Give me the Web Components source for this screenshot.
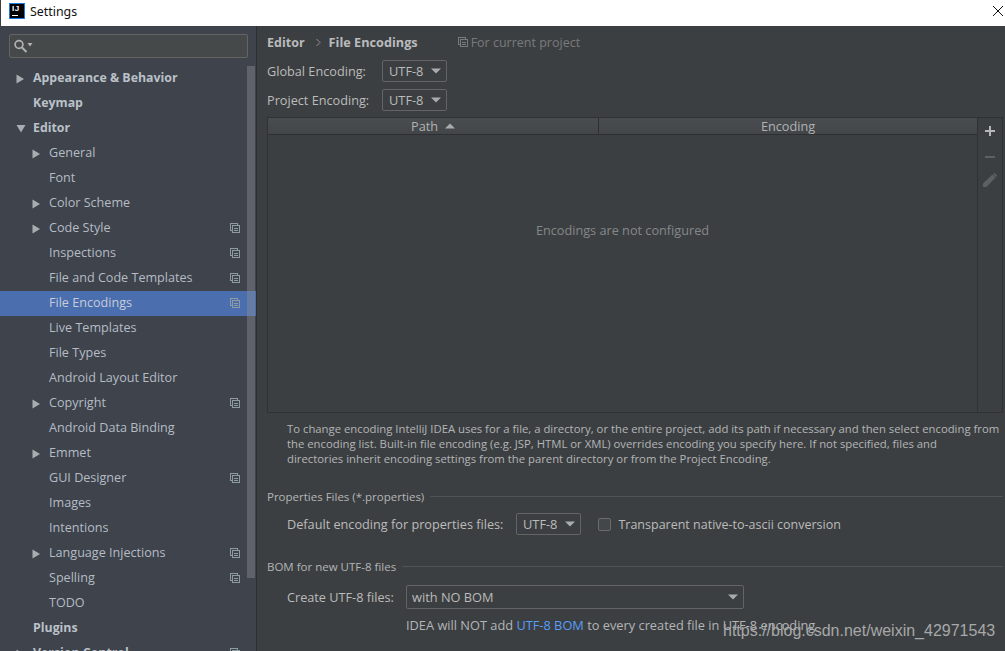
<!DOCTYPE html>
<html><head><meta charset="utf-8"><title>Settings</title>
<style>
html,body{margin:0;padding:0;height:651px;overflow:hidden;background:#3c3f41}
body{font:12.700px "Open Sans","Noto Sans",sans-serif;color:#bbb}
</style></head><body>
<settings-window></settings-window>
<script>
const copyIcon=`<svg width="10" height="10" viewBox="0 0 10 10" fill="none" stroke="#8f9ba3" stroke-width="1" shape-rendering="crispEdges"><path d="M7.5 1.5V.5H.5V7.5H1.5"/><rect x="2.5" y="2.5" width="7" height="7"/><path d="M4 5H8M4 7H8"/></svg>`;
function def(name,css,html,init){customElements.define(name,class extends HTMLElement{
  constructor(){super();const s=this.attachShadow({mode:'open'});s.innerHTML=`<style>${css}</style>`+(typeof html==='function'?html(this):html);}
  connectedCallback(){if(init)init.call(this,this.shadowRoot);}
});}
def('title-bar',`:host{display:flex;align-items:center;height:26px;background:#fff;color:#111;font:12.400px "Noto Sans","Open Sans",sans-serif;padding:0 0 4px 8px;border-left:1px solid #3c3f41;box-sizing:border-box}
.logo{width:16px;height:16px;box-sizing:border-box;background:#000;border:1px solid #1e78e0;color:#fff;position:relative;margin:-1px 5px 0 0;flex:none}
.logo b{position:absolute;left:2px;top:1px;font:bold 8px/8px "Liberation Sans",sans-serif;letter-spacing:.5px}
.logo i{position:absolute;left:2px;top:11px;width:6px;height:1px;background:#fff}
span{flex:1}
svg{margin-right:1px}`,`<div class="logo"><b>IJ</b><i></i></div><span>Settings</span><svg width="12" height="12" viewBox="0 0 12 12" stroke="#111" stroke-width="1" fill="none"><path d="M1 1L11 11M11 1L1 11"/></svg>`);
def('search-box',`:host{display:flex;align-items:center;height:24px;box-sizing:border-box;margin:8px 8px 8px 9px;background:#45494a;border:1px solid #646464;border-radius:2px;padding-left:4px}`,
`<svg width="19" height="14" viewBox="0 0 19 14" fill="none"><circle cx="5" cy="5.500" r="3.900" stroke="#afb1b3" stroke-width="1.700"/><path d="M8 8.500L12.500 13" stroke="#afb1b3" stroke-width="2"/><path d="M13.500 4H18.500L16 7.500Z" fill="#afb1b3"/></svg>`);
def('tree-row',`:host{display:flex;align-items:center;height:25px;position:relative;padding-right:16px;padding-bottom:2px;box-sizing:border-box;font-size:12.600px;color:#b5bcc4;white-space:nowrap}
:host([selected]){background:#4b6eaf;color:#c5cdd8}
:host([top]){font-weight:700;font-size:12.350px;padding-left:33px;color:#bbc1c8}
:host([sub]){padding-left:49px}
.arr{position:absolute;top:8px}
:host([top]) .arr{left:16px}:host([sub]) .arr{left:32px}
.t{flex:1}
svg{display:block;flex:none}`,
h=>{const a=h.getAttribute('arrow');return (a==='r'?`<svg class="arr" width="9" height="10" viewBox="0 0 9 10"><path d="M0.500 0.500L8 5L0.500 9.500Z" fill="#a8adb2"/></svg>`:a==='d'?`<svg class="arr" width="10" height="9" viewBox="0 0 10 9"><path d="M0.500 1H9.500L5 8.500Z" fill="#a8adb2"/></svg>`:'')+`<span class="t"><slot></slot></span>`+(h.hasAttribute('copy')?`<span class="c">${copyIcon}</span>`:'');});
def('settings-sidebar',`:host{display:block;position:relative;width:256px;flex:none;background:#3e434c;border-right:1px solid #2d2f31;overflow:hidden}
.bar{position:absolute;left:247px;top:40px;width:8px;height:512px;background:rgba(140,143,150,.42)}`,
`<search-box></search-box><div class="tree"><slot></slot></div><div class="bar"></div>`);
def('combo-box',`:host{display:inline-flex;align-items:center;box-sizing:border-box;height:22px;padding:0 5px 0 6px;border:1px solid #646464;border-radius:2px;background:#3c3f41;font:12.800px "Open Sans","Noto Sans",sans-serif;color:#bbb;white-space:nowrap}
:host([wide]){padding-left:5px}
span{flex:1}
svg{flex:none;margin-left:8px}`,`<span><slot></slot></span><svg width="10" height="6" viewBox="0 0 10 6"><path d="M0 .5H10L5 5.500Z" fill="#a9acae"/></svg>`);
def('form-row',`:host{display:flex;align-items:center;white-space:nowrap}`,`<slot></slot>`);
def('group-title',`:host{display:flex;align-items:center;gap:6px;height:16px;font-size:11.500px;color:#b3b5b7;white-space:nowrap}
i{flex:1;height:1px;background:#515355}`,`<span><slot></slot></span><i></i>`);
def('encoding-table',`:host{display:flex;height:296px;box-sizing:border-box;border:1px solid #2f3133}
.main{flex:1;display:flex;flex-direction:column;min-width:0}
.head{display:flex;height:17px;flex:none;background:linear-gradient(#4a4d4f,#434648);border-bottom:1px solid #2d2f31;font-size:12.700px;color:#b0b2b4;box-sizing:border-box}
.h{display:flex;align-items:center;justify-content:center;gap:7px;line-height:15px}
.p{width:330px;border-right:1px solid #2d2f31}
.e{flex:1}
.body{flex:1;display:flex;align-items:center;justify-content:center;color:#85888b;font-size:12.700px;padding-bottom:88px}
.tools{width:25px;flex:none;border-left:1px solid #2f3133;display:flex;flex-direction:column;align-items:center;padding:5px 1px 0 0;gap:10px;box-sizing:border-box}
svg{display:block}`,
`<div class="main"><div class="head"><div class="h p">Path <svg width="10" height="6" viewBox="0 0 10 6"><path d="M0 5.500H10L5 .5Z" fill="#a9acae"/></svg></div><div class="h e">Encoding</div></div><div class="body">Encodings are not configured</div></div>
<div class="tools"><svg width="10" height="16" viewBox="0 0 10 16"><path d="M0 7H10V9H0ZM4 3H6V13H4Z" fill="#b4b6b8"/></svg>
<svg style="margin-top:-1px" width="10" height="16" viewBox="0 0 10 16"><path d="M0 8H10V10H0Z" fill="#5d6062"/></svg>
<svg style="margin-top:-1px" width="14" height="14" viewBox="0 0 14 14"><path d="M0 14V10.500L9.500 1.500L12.500 4.500L3.500 14Z M10.500 .5Q11.500 -.2 12.500 .7L13.500 1.700Q14.200 2.700 13.500 3.500L12.800 4L10 1Z" fill="#5d6062"/></svg></div>`);
def('check-box',`:host{display:inline-flex;align-items:center;gap:7px;font-size:12.500px}
i{width:11px;height:11px;border:1px solid #6b6b6b;border-radius:2px;background:#43474a;display:block}`,`<i></i><span><slot></slot></span>`);
def('water-mark',`:host{position:absolute;left:723px;top:621px;font:16px "Liberation Sans",Arial,sans-serif;color:#a6a8a9;white-space:nowrap;line-height:20px}`,`<slot></slot>`);
def('encodings-page',`:host{display:block;flex:1;min-width:0;padding:0 2px 0 10px;box-sizing:border-box;overflow:hidden}
.crumb{display:flex;align-items:center;height:16px;margin-top:8px;white-space:nowrap;color:#b9bbbd}
.crumb b{font-weight:700;font-size:12.500px}
.crumb b+svg+b{font-size:12.700px}
.crumb svg{margin:0 8px 0 11px}
.crumb .proj{display:flex;align-items:center;gap:3px;margin-left:40px;color:#787b7d;font-size:12.500px}
.crumb .proj svg{margin:0}
.lab{display:block;width:115px}
.r1{margin-top:10px}.r2{margin-top:7px}
encoding-table{margin-top:6px}
.note{margin:8px 0 0 20px;font-size:11.320px;line-height:15px;color:#b3b5b7;white-space:nowrap}
.g1{margin-top:22px}
.d{margin:9px 0 0 20px}
.g2{margin-top:23px}
a{color:#589df6;text-decoration:none}
.hint{margin:7px 0 0 139px;font-size:12.800px;white-space:nowrap;color:#b3b5b7}`,
`<div class="crumb"><b>Editor</b><svg width="5" height="9" viewBox="0 0 5 9" fill="none" stroke="#909294"><path d="M.5 1L4 4.500L.5 8"/></svg><b>File Encodings</b><span class="proj">${copyIcon.replace('#8f9ba3','#787b7d')}<span>For current project</span></span></div>
<form-row class="r1"><span class="lab">Global Encoding:</span><combo-box>UTF-8</combo-box></form-row>
<form-row class="r2"><span class="lab">Project Encoding:</span><combo-box>UTF-8</combo-box></form-row>
<encoding-table></encoding-table>
<div class="note">To change encoding IntelliJ IDEA uses for a file, a directory, or the entire project, add its path if necessary and then select encoding from<br>the encoding list. Built-in file encoding (e.g. JSP, HTML or XML) overrides encoding you specify here. If not specified, files and<br>directories inherit encoding settings from the parent directory or from the Project Encoding.</div>
<group-title class="g1">Properties Files (*.properties)</group-title>
<form-row class="d"><span style="width:229px">Default encoding for properties files:</span><combo-box>UTF-8</combo-box><check-box style="margin-left:17px">Transparent native-to-ascii conversion</check-box></form-row>
<group-title class="g2">BOM for new UTF-8 files</group-title>
<form-row class="d" style="margin-top:11px"><span style="width:119px">Create UTF-8 files:</span><combo-box wide style="width:338px;height:24px">with NO BOM</combo-box></form-row>
<div class="hint">IDEA will NOT add <a>UTF-8 BOM</a> to every created file in UTF-8 encoding</div>`);
const rows=[['t','r','Appearance &amp; Behavior'],['t','','Keymap'],['t','d','Editor'],['s','r','General'],['s','','Font'],['s','r','Color Scheme'],['s','r','Code Style',1],['s','','Inspections',1],['s','','File and Code Templates',1],['s','','File Encodings',1,1],['s','','Live Templates'],['s','','File Types'],['s','','Android Layout Editor'],['s','r','Copyright',1],['s','','Android Data Binding'],['s','r','Emmet'],['s','','GUI Designer',1],['s','','Images'],['s','','Intentions'],['s','r','Language Injections',1],['s','','Spelling',1],['s','','TODO'],['t','','Plugins'],['t','r','Version Control',1]];
def('settings-window',`:host{display:flex;flex-direction:column;height:651px;overflow:hidden;position:relative}
.w{display:flex;flex:1;min-height:0}`,
`<title-bar></title-bar><div class="w"><settings-sidebar>${rows.map(r=>`<tree-row ${r[0]==='t'?'top':'sub'} ${r[1]?`arrow="${r[1]}"`:''} ${r[3]?'copy':''} ${r[4]?'selected':''}>${r[2]}</tree-row>`).join('')}</settings-sidebar><encodings-page></encodings-page></div><water-mark>https://blog.csdn.net/weixin_42971543</water-mark>`);
</script></body></html>
